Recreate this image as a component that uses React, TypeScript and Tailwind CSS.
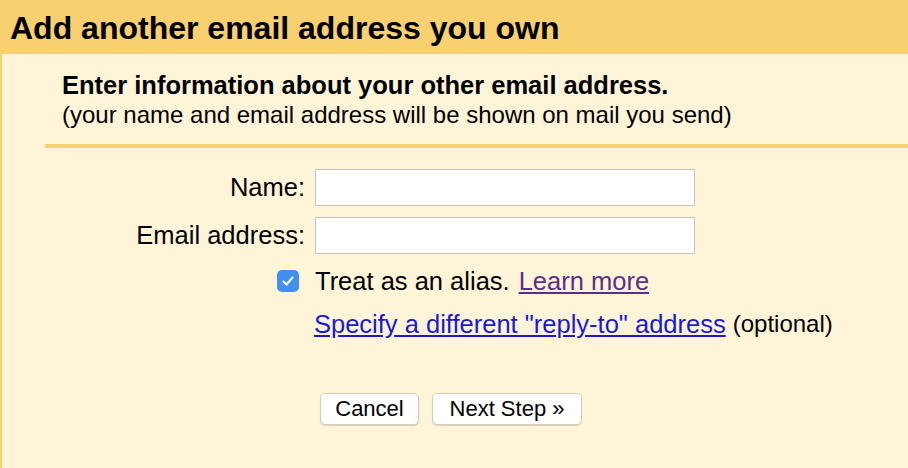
import React from "react";

export default function App() {
  const font = { fontFamily: '"Liberation Sans", Arial, sans-serif' };
  return (
    <div className="w-[908px] h-[468px] bg-[#fef5d9] flex flex-col overflow-hidden" style={font}>
      <div className="h-[54px] shrink-0 bg-[#f9d06f] flex items-center pl-[10px] pt-[2px]">
        <h1 className="text-[32px] font-bold text-black leading-none">Add another email address you own</h1>
      </div>
      <div className="flex-1 border-l-2 border-[#f9d06f] bg-[#fef5d9] flex flex-col">
        <div className="pl-[60px] pt-[16px] pb-[14px]">
          <div className="text-[25.5px] font-bold leading-[30px] text-black">Enter information about your other email address.</div>
          <div className="text-[24px] leading-[30px] text-black">(your name and email address will be shown on mail you send)</div>
        </div>
        <div className="ml-[43px] h-[4px] bg-[#f9d06f]"></div>
        <div className="grid grid-cols-[303px_auto] gap-x-[10px] gap-y-[11px] pt-[21px] justify-start">
          <div className="h-[37px] flex items-center justify-end text-[25.5px] text-black">Name:</div>
          <input className="w-[380px] h-[37px] bg-white border border-[#c4c4c4] outline-none" />
          <div className="h-[37px] flex items-center justify-end text-[25.5px] text-black">Email address:</div>
          <input className="w-[380px] h-[37px] bg-white border border-[#c4c4c4] outline-none" />
        </div>
        <div className="flex items-center mt-[12px] ml-[275px] h-[30px]">
          <div className="w-[22px] h-[22px] rounded-[5px] bg-[#4290ee] flex items-center justify-center mr-[16px]">
            <svg width="14" height="14" viewBox="0 0 14 14" fill="none">
              <path d="M2.5 7.5 L5.5 10.5 L11.5 3.5" stroke="white" strokeWidth="2" strokeLinecap="round" strokeLinejoin="round" />
            </svg>
          </div>
          <span className="text-[25.5px] text-black">Treat as an alias.</span>
          <a className="text-[25.5px] text-[#5b2e8c] underline ml-[9px]" href="#">Learn more</a>
        </div>
        <div className="flex items-center ml-[312px] mt-[13px] h-[30px]">
          <a className="text-[25.5px] text-[#1a1ad6] underline" href="#">Specify a different "reply-to" address</a>
          <span className="text-[24px] text-black ml-[7px]">(optional)</span>
        </div>
        <div className="flex ml-[318px] mt-[54px] gap-[13px]">
          <button className="h-[32px] w-[99px] bg-white rounded-[5px] border border-[#d2ccbc] shadow-[0_1px_1px_rgba(0,0,0,0.15)] text-[22px] text-black leading-none">Cancel</button>
          <button className="h-[32px] w-[150px] bg-white rounded-[5px] border border-[#d2ccbc] shadow-[0_1px_1px_rgba(0,0,0,0.15)] text-[22px] text-black leading-none">Next Step »</button>
        </div>
      </div>
    </div>
  );
}
